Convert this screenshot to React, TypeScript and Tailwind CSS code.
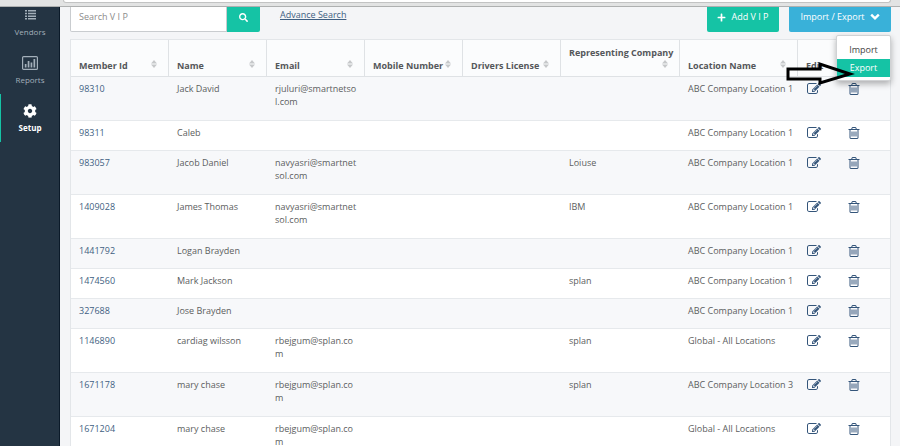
import type { ReactNode } from "react";
import { FaCog, FaPlus, FaSearch } from "react-icons/fa";

type Member = {
  id: string;
  name: string;
  email?: string;
  company?: string;
  location: string;
};

const members: Member[] = [
  { id: "98310", name: "Jack David", email: "rjuluri@smartnetsol.com", location: "ABC Company Location 1" },
  { id: "98311", name: "Caleb", location: "ABC Company Location 1" },
  { id: "983057", name: "Jacob Daniel", email: "navyasri@smartnetsol.com", company: "Loiuse", location: "ABC Company Location 1" },
  { id: "1409028", name: "James Thomas", email: "navyasri@smartnetsol.com", company: "IBM", location: "ABC Company Location 1" },
  { id: "1441792", name: "Logan Brayden", location: "ABC Company Location 1" },
  { id: "1474560", name: "Mark Jackson", company: "splan", location: "ABC Company Location 1" },
  { id: "327688", name: "Jose Brayden", location: "ABC Company Location 1" },
  { id: "1146890", name: "cardiag wilsson", email: "rbejgum@splan.com", company: "splan", location: "Global - All Locations" },
  { id: "1671178", name: "mary chase", email: "rbejgum@splan.com", company: "splan", location: "ABC Company Location 3" },
  { id: "1671204", name: "mary chase", email: "rbejgum@splan.com", location: "Global - All Locations" },
];

const columns = [
  "Member Id",
  "Name",
  "Email",
  "Mobile Number",
  "Drivers License",
  "Representing Company",
  "Location Name",
];

function EditIcon() {
  return (
    <svg viewBox="0 0 1792 1792" className="size-[14px]" fill="currentColor" aria-hidden="true">
      <path d="M888 1184l116-116-152-152-116 116v56h96v96h56zm440-720q-16-16-33 1l-350 350q-17 17-1 33t33-1l350-350q17-17 1-33zm80 594v190q0 119-84.5 203.5t-203.5 84.5h-832q-119 0-203.5-84.5t-84.5-203.5v-832q0-119 84.5-203.5t203.5-84.5h832q63 0 117 25 15 7 18 23 3 17-9 29l-49 49q-14 14-32 8-23-6-45-6h-832q-66 0-113 47t-47 113v832q0 66 47 113t113 47h832q66 0 113-47t47-113v-126q0-13 9-22l64-64q15-15 35-7t20 29zm-96-738l288 288-672 672h-288v-288zm444 132l-92 92-288-288 92-92q28-28 68-28t68 28l152 152q28 28 28 68t-28 68z" />
    </svg>
  );
}

function TrashIcon() {
  return (
    <svg viewBox="0 0 1792 1792" className="size-[14px]" fill="currentColor" aria-hidden="true">
      <path d="M704 736v576q0 14-9 23t-23 9h-64q-14 0-23-9t-9-23v-576q0-14 9-23t23-9h64q14 0 23 9t9 23zm256 0v576q0 14-9 23t-23 9h-64q-14 0-23-9t-9-23v-576q0-14 9-23t23-9h64q14 0 23 9t9 23zm256 0v576q0 14-9 23t-23 9h-64q-14 0-23-9t-9-23v-576q0-14 9-23t23-9h64q14 0 23 9t9 23zm128 724v-948h-896v948q0 22 7 40.5t14.5 27 10.5 8.5h832q3 0 10.5-8.5t14.5-27 7-40.5zm-672-1076h448l-48-117q-7-9-17-11h-317q-10 2-17 11zm928 32v64q0 14-9 23t-23 9h-96v948q0 83-47 143.5t-113 60.5h-832q-66 0-113-58.5t-47-141.5v-952h-96q-14 0-23-9t-9-23v-64q0-14 9-23t23-9h309l70-167q15-37 54-63t79-26h320q40 0 79 26t54 63l70 167h309q14 0 23 9t9 23z" />
    </svg>
  );
}

function ListIcon() {
  return (
    <svg viewBox="0 0 11 10" className="h-[10px] w-[11px]" fill="currentColor" aria-hidden="true">
      <path d="M0 0h2v1.5H0zM0 2.8h2v1.5H0zM0 5.4h2v1.5H0zM0 8h2v1.5H0zM3 0h8v1.5H3zM3 2.8h8v1.5H3zM3 5.4h8v1.5H3zM3 8h8v1.5H3z" />
    </svg>
  );
}

function ChartIcon() {
  return (
    <svg viewBox="0 0 16 14" className="h-[14px] w-[16px]" aria-hidden="true">
      <rect x=".6" y=".6" width="14.8" height="12.8" rx="1" fill="none" stroke="currentColor" strokeWidth="1.2" />
      <path d="M2.800 8h1.700v3.500H2.800zM5.700 5h1.700v6.500H5.700zM8.600 6.500h1.700v5H8.600zM11.500 3h1.700v8.500h-1.700z" fill="currentColor" />
    </svg>
  );
}

function ChevronIcon() {
  return (
    <svg viewBox="0 0 10 8" className="h-2 w-[10px]" fill="none" stroke="currentColor" strokeWidth="2.4" aria-hidden="true">
      <path d="M1.200 1.600 5 5.400l3.800-3.800" />
    </svg>
  );
}

function SortIcon() {
  return (
    <svg viewBox="0 0 6 8" className="h-2 w-[6px] shrink-0" fill="#c6c8ca" aria-hidden="true">
      <path d="M3 0 6 3.400H0zM3 8 0 4.600h6z" />
    </svg>
  );
}

function NavItem({ icon, label, active = false }: { icon: ReactNode; label: string; active?: boolean }) {
  return (
    <a
      href="#"
      className={
        active
          ? "flex h-12 flex-col items-center gap-[3px] border-l border-[#15c3a5] pt-[9px] font-bold text-white"
          : "flex h-12 flex-col items-center gap-[3px] border-l border-transparent pt-[9px] text-[#a3afba]"
      }
    >
      <span className="flex h-4 items-center">{icon}</span>
      <span className="text-[8px] leading-3">{label}</span>
    </a>
  );
}

export default function App() {
  return (
    <div className="flex h-screen flex-col overflow-hidden bg-[#f4f5f7] font-['Open_Sans','Noto_Sans',sans-serif] text-[9px] text-[#5c5e60]">
      <div className="h-[7px] shrink-0 border-b border-[#aeb0b0] bg-[#e2e3e3] pr-[9px] pl-[63px]">
        <div className="h-[3px] rounded-b-sm border-x border-b border-[#c2c3c3] bg-white" />
      </div>

      <div className="flex min-h-0 flex-1">
        <aside className="w-[60px] shrink-0 overflow-hidden border-r border-[#0b1a29] bg-[#243443]">
          <nav className="-mt-[9px]">
            <NavItem icon={<ListIcon />} label="Vendors" />
            <NavItem icon={<ChartIcon />} label="Reports" />
            <NavItem icon={<FaCog size={14} />} label="Setup" active />
          </nav>
        </aside>

        <main className="min-w-0 flex-1 overflow-hidden pr-[9px] pl-[10px]">
          <div className="flex items-start">
            <input
              type="text"
              aria-label="Search V I P"
              placeholder="Search V I P"
              className="h-[25px] w-[157px] rounded-bl-[2px] border border-t-0 border-[#c9cccf] bg-white px-2 pb-[5px] text-[9px] outline-none placeholder:text-[#8c8c8c]"
            />
            <button type="button" aria-label="Search" className="flex h-[25px] w-[33px] items-center justify-center rounded-br-[2px] bg-[#15c3a5] pb-[5px] text-white">
              <FaSearch size={9} />
            </button>
            <a href="#" className="ml-5 text-[9px] leading-4 text-[#3f5f82] underline">Advance Search</a>

            <div className="ml-auto flex gap-[10px] text-white">
              <button type="button" className="flex h-[25px] w-[72px] items-center justify-center gap-[5px] rounded-b-[2px] bg-[#15c3a5] pb-[5px]">
                <FaPlus size={9} />
                Add V I P
              </button>
              <div className="relative">
                <button type="button" aria-haspopup="menu" aria-expanded="true" className="flex h-[25px] w-[102px] items-center justify-center gap-[5px] rounded-b-[2px] bg-[#39b1d9] pb-[5px]">
                  Import / Export
                  <ChevronIcon />
                </button>
                <ul role="menu" className="absolute top-7 right-0 z-10 w-[55px] rounded-[2px] border border-[#d0d2d4] bg-white pt-[5px] pb-[3px] text-center leading-[18px] text-[#444444] shadow-[0_3px_6px_rgba(0,0,0,0.3)]">
                  <li role="none">
                    <button role="menuitem" type="button" className="block h-[18px] w-full">Import</button>
                  </li>
                  <li role="none">
                    <button role="menuitem" type="button" className="block h-[18px] w-full bg-[#15c3a5] text-white">Export</button>
                  </li>
                </ul>
                <svg viewBox="0 0 70 26" className="pointer-events-none absolute top-[54px] right-[35px] z-20 h-[26px] w-[70px]" aria-hidden="true">
                  <path d="M2 8H34V3L64 13 34 22V18H2z" fill="none" stroke="#000000" strokeWidth="3" />
                </svg>
              </div>
            </div>
          </div>

          <table className="mt-[7px] w-full table-fixed border-separate border-spacing-0 border border-[#e3e6e9] text-left">
            <colgroup>
              <col className="w-[98px]" />
              <col className="w-[98px]" />
              <col className="w-[98px]" />
              <col className="w-[98px]" />
              <col className="w-[98px]" />
              <col className="w-[119px]" />
              <col className="w-[118px]" />
              <col className="w-[41px]" />
              <col />
            </colgroup>
            <thead>
              <tr className="bg-[#fbfcfd] align-bottom leading-[13px] text-[#55575a]">
                {columns.map((column) => (
                  <th key={column} scope="col" className="h-[37px] border-r border-b border-[#dfe2e5] pr-[11px] pb-1 pl-2 font-bold">
                    <div className="flex flex-wrap items-center justify-between">
                      <span className="whitespace-nowrap">{column}</span>
                      <span className="ml-auto flex h-[13px] items-start pt-px"><SortIcon /></span>
                    </div>
                  </th>
                ))}
                <th scope="col" className="border-b border-[#dfe2e5] pb-1 pl-2 font-bold">Edit</th>
                <td className="border-b border-[#dfe2e5]" />
              </tr>
            </thead>
            <tbody className="leading-[13px] [&_td]:border-b [&_td]:border-[#e6e9ec] [&_td]:pt-[5px] [&_td]:pl-2">
              {members.map((member, index) => (
                <tr
                  key={member.id}
                  className={`${index % 2 === 0 ? "bg-[#f7f8fa]" : "bg-white"} ${member.email ? "h-11" : "h-[30px]"} align-top`}
                >
                  <td><a href="#" className="text-[#3f5f82]">{member.id}</a></td>
                  <td>{member.name}</td>
                  <td className="pr-2 break-all">{member.email}</td>
                  <td />
                  <td />
                  <td>{member.company}</td>
                  <td className="whitespace-nowrap">{member.location}</td>
                  <td>
                    <button type="button" aria-label={`Edit ${member.name}`} className="block pl-px text-[#34557a]">
                      <EditIcon />
                    </button>
                  </td>
                  <td>
                    <button type="button" aria-label={`Delete ${member.name}`} className="block text-[#34557a]">
                      <TrashIcon />
                    </button>
                  </td>
                </tr>
              ))}
            </tbody>
          </table>
        </main>
      </div>
    </div>
  );
}
